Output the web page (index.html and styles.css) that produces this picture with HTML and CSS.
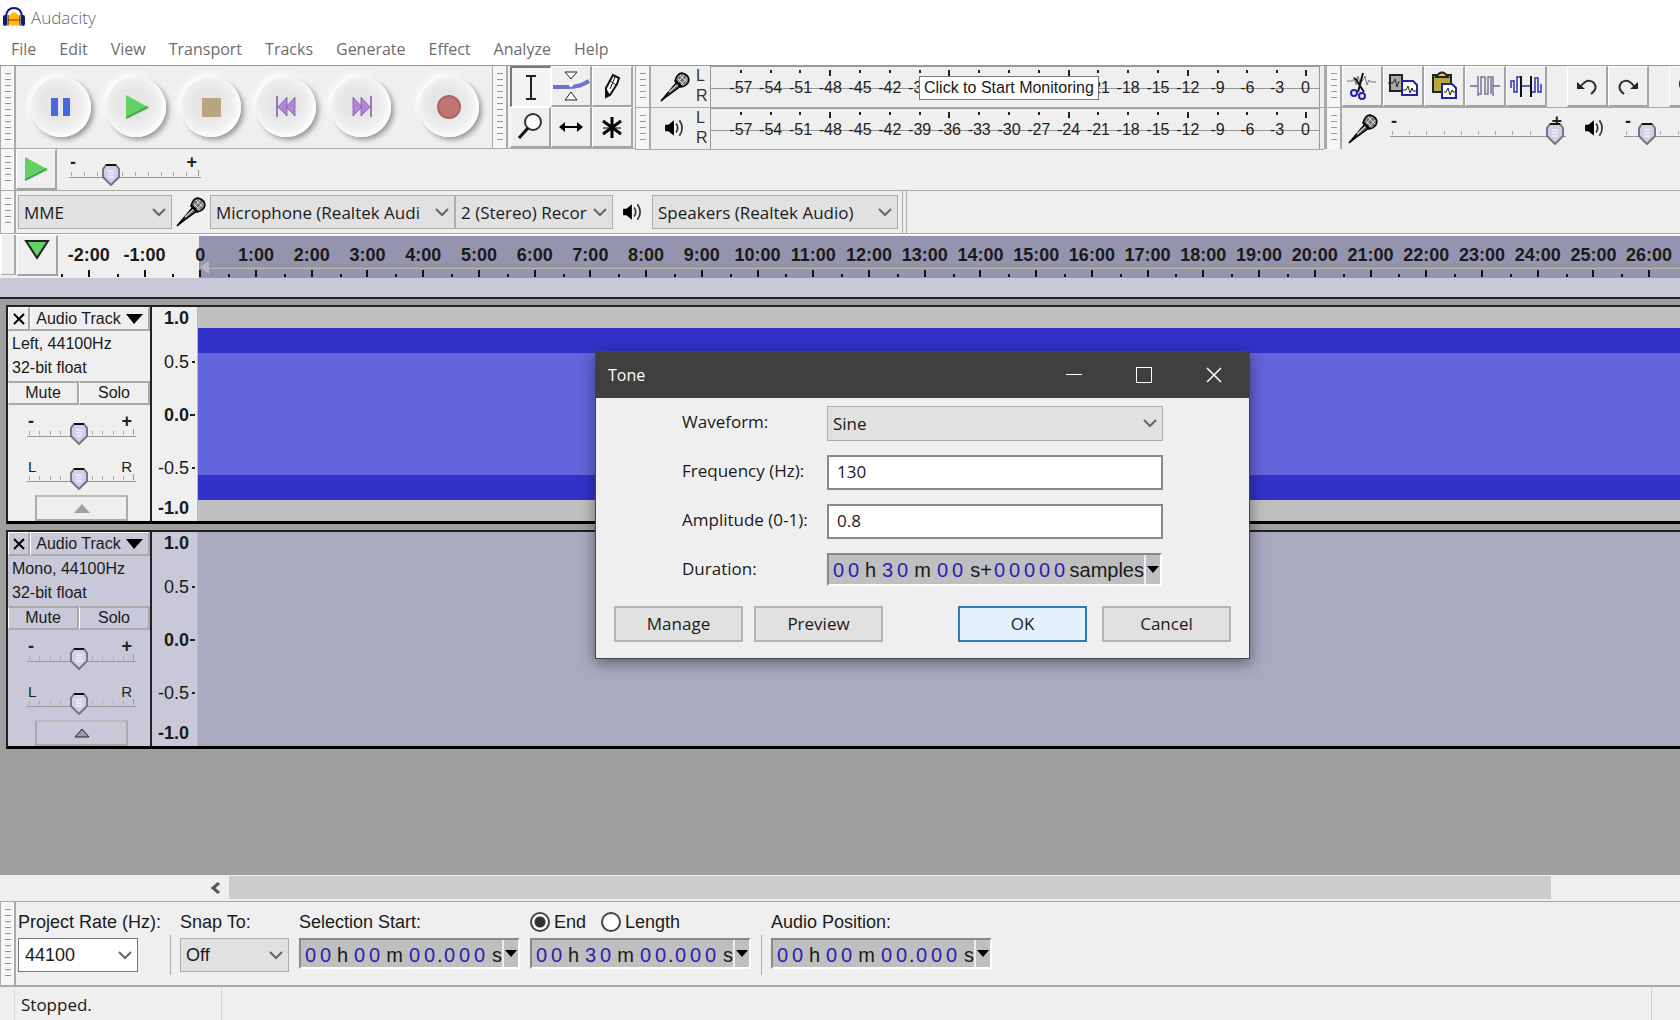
FILE: index.html
```html
<!DOCTYPE html>
<html lang="en">
<head>
<meta charset="UTF-8">
<meta name="viewport" content="width=device-width, initial-scale=1.0">
<title>Audacity</title>
<link rel="stylesheet" href="styles.css">
</head>
<body>

<svg class="defs" width="0" height="0">
    <symbol id="mic" viewBox="0 0 30 30">
        <path d="M1 29 L17 10 L21 14 L6 25 Z" fill="#555" stroke="#000" stroke-width="1.5"/>
        <path d="M9 20 L18 12" stroke="#ccc" stroke-width="1.5"/>
        <path d="M15 9 Q17 1 22 1 Q29 3 29 8 Q28 14 21 15 Z" fill="#777" stroke="#000" stroke-width="1.5"/>
        <path d="M18 7 L24 13 M20 3 L27 10 M24 3 L18 10 M27 6 L21 13" stroke="#ddd"/>
        <path d="M15 8 L22 15" stroke="#000" stroke-width="2"/>
    </symbol>
    <symbol id="speaker" viewBox="0 0 20 20">
        <path d="M1 7 H4 L9 3 V17 L4 13 H1 Z" fill="#000"/>
        <path d="M11 6 Q14 10 11 14 M14 3 Q19 10 14 17" fill="none" stroke="#333" stroke-width="1.5"/>
    </symbol>
</svg>

<header class="titlebar">
    <svg width="22" height="21" viewBox="0 0 22 21">
        <path d="M3 9 Q4 1 11 1 Q18 1 19 9" fill="none" stroke="#111a6e" stroke-width="2"/>
        <path d="M5 9 L8 7 L9 5 L11 6 L13 5 L14 7 L17 9 V17 L14 19 L12 18 L10 19 L5 17 Z" fill="#fdb913"/>
        <path d="M5 12 H17 V14 H5 Z" fill="#e0641c"/>
        <rect x="0" y="8" width="4" height="11" rx="2" fill="#111a6e"/>
        <rect x="18" y="8" width="4" height="11" rx="2" fill="#111a6e"/>
        <path d="M5 8 V19 M17 8 V19" stroke="#222"/>
    </svg>
    <span>Audacity</span>
</header>

<nav class="menu">
    <a href="#">File</a><a href="#">Edit</a><a href="#">View</a><a href="#">Transport</a><a href="#">Tracks</a><a href="#">Generate</a><a href="#">Effect</a><a href="#">Analyze</a><a href="#">Help</a>
</nav>

<div class="dock">
    <div class="toolbar">
        <div class="grip"></div>
        <div class="transport">
            <button class="round" aria-label="Pause"><svg width="26" height="26"><path d="M3 4 h7 v18 h-7 Z M15 4 h7 v18 h-7 Z" fill="#4667e0"/></svg></button>
            <button class="round" aria-label="Play"><svg width="26" height="26"><path d="M3 1 L25 13 L3 24 Z" fill="#65d065"/><path d="M3 24 L25 13" stroke="#4aa84a" stroke-width="2"/></svg></button>
            <button class="round" aria-label="Stop"><svg width="26" height="26"><rect x="4" y="4" width="19" height="19" fill="#b8a77e"/></svg></button>
            <button class="round" aria-label="Skip to Start"><svg width="26" height="26"><path d="M4 2 V23" stroke="#7d5a9c" stroke-width="1.5"/><path d="M14 3 V22 L5 13 Z M22 3 V22 L13 13 Z" fill="#b184dc" stroke="#8d6aae"/></svg></button>
            <button class="round" aria-label="Skip to End"><svg width="26" height="26"><path d="M23 2 V23" stroke="#7d5a9c" stroke-width="1.5"/><path d="M13 3 V22 L22 13 Z M5 3 V22 L14 13 Z" fill="#b184dc" stroke="#8d6aae"/></svg></button>
            <button class="round record" aria-label="Record"><svg width="26" height="26"><circle cx="13" cy="13" r="11" fill="#c07474" stroke="#a86464" stroke-width="2"/></svg></button>
        </div>
    </div>

    <div class="toolbar">
        <div class="grip"></div>
        <div class="tools">
            <button class="tile pressed" aria-label="Selection Tool"><svg width="30" height="30"><path d="M10 4 H20 M10 27 H20 M15 4 V27" stroke="#222" stroke-width="2"/></svg></button>
            <button class="tile" aria-label="Envelope Tool"><svg width="38" height="34"><path d="M1 18 H18 Q28 18 37 12" fill="none" stroke="#7070d0" stroke-width="4"/><path d="M13 3 H25 L19 10 Z M13 31 H25 L19 23 Z" fill="#fff" stroke="#222"/><circle cx="19" cy="16" r="2" fill="#fff"/></svg></button>
            <button class="tile" aria-label="Draw Tool"><svg width="30" height="30"><path d="M9 17 L16 4 L22 7 L20 13 L13 24 L9 26 Z" fill="#fff" stroke="#111" stroke-width="2"/><path d="M9 17 L13 24 L8 27 Z" fill="#111"/><path d="M13 10 L19 14 M18 6 L13 18" stroke="#111"/></svg></button>
            <button class="tile" aria-label="Zoom Tool"><svg width="30" height="30"><circle cx="18" cy="10" r="8" fill="#fff" stroke="#333" stroke-width="2"/><path d="M13 16 L4 26" stroke="#111" stroke-width="3"/></svg></button>
            <button class="tile" aria-label="Time Shift Tool"><svg width="30" height="30"><path d="M6 15 H24" stroke="#000" stroke-width="2"/><path d="M3 15 L9 10 V20 Z M27 15 L21 10 V20 Z"/></svg></button>
            <button class="tile" aria-label="Multi-Tool"><svg width="30" height="30"><path d="M15 5 V26 M6 9 L24 22 M24 9 L6 22" stroke="#000" stroke-width="3"/><path d="M6 16 H24" stroke="#000"/></svg></button>
        </div>
    </div>

    <div class="meters">
        <div class="toolbar meter">
            <div class="grip"></div>
            <svg class="meter-icon" width="30" height="30"><use href="#mic"/></svg>
            <div class="channels"><span>L</span><span>R</span></div>
            <div class="scale"></div>
            <div class="tooltip">Click to Start Monitoring</div>
        </div>
        <div class="toolbar meter">
            <div class="grip"></div>
            <svg class="meter-icon" width="22" height="22"><use href="#speaker"/></svg>
            <div class="channels"><span>L</span><span>R</span></div>
            <div class="scale"></div>
        </div>
    </div>

    <div class="edit-mixer">
        <div class="toolbar">
            <div class="grip"></div>
            <button class="tile" aria-label="Cut"><svg width="32" height="32"><path d="M1 11 H7 l1 -4 l2 8 l2 -9 l2 7 l3 -3 l2 -4 l2 9 l2 -5 l2 2 H30" fill="none" stroke="#777"/><path d="M17 3 L12 22 M9 8 L18 22" stroke="#111" stroke-width="2"/><circle cx="8" cy="23" r="3" fill="none" stroke="#2222b0" stroke-width="2"/><circle cx="16" cy="26" r="3" fill="none" stroke="#2222b0" stroke-width="2"/></svg></button>
            <button class="tile" aria-label="Copy"><svg width="32" height="32"><rect x="3" y="5" width="12" height="16" fill="#aaa" stroke="#222" stroke-width="2"/><path d="M1 13 H6 l2 -4 l2 8 l2 -6" fill="none" stroke="#222"/><path d="M15 11 H26 L30 15 V25 H15 Z" fill="#fff" stroke="#2222b0" stroke-width="2"/><path d="M15 20 h4 l2 -4 l2 7 l2 -5 l1 3 h4" fill="none" stroke="#222"/></svg></button>
            <button class="tile" aria-label="Paste"><svg width="32" height="32"><rect x="5" y="5" width="18" height="17" fill="#b6a93c" stroke="#222" stroke-width="2"/><path d="M8 7 Q14 -2 20 7 Z" fill="#d8cc50" stroke="#222" stroke-width="2"/><path d="M14 14 H24 L28 18 V28 H14 Z" fill="#fff" stroke="#2222b0" stroke-width="2"/><path d="M16 22 h2 l2 -4 l2 7 l2 -5 l1 2 h2" fill="none" stroke="#222"/></svg></button>
            <button class="tile" aria-label="Trim Audio"><svg width="32" height="32"><path d="M1 16 H8 M24 16 H31" stroke="#6a6a90" stroke-width="1.5"/><path d="M9 6 V26 M9 24 H12 V7 H16 V24 H19 V7 H22 V24 M24 6 V26" fill="none" stroke="#777794" stroke-width="1.5"/></svg></button>
            <button class="tile" aria-label="Silence Audio"><svg width="32" height="32"><path d="M1 18 V11 H4 V22 H7 V7 H10 M11 16 H22 M22 22 H25 V8 H28 V22 H31 V14" fill="none" stroke="#3030b8" stroke-width="1.5"/><path d="M11 6 V27 M21 6 V27" stroke="#111" stroke-width="2"/></svg></button>
            <span class="spacer"></span>
            <button class="tile" aria-label="Undo"><svg width="30" height="30"><path d="M9 15 Q15 7 21 11 Q27 17 19 23" fill="none" stroke="#333" stroke-width="2"/><path d="M5 11 V18 H13 Z" fill="#222"/></svg></button>
            <button class="tile" aria-label="Redo"><svg width="30" height="30"><path d="M21 15 Q15 7 9 11 Q3 17 11 23" fill="none" stroke="#333" stroke-width="2"/><path d="M25 11 V18 H17 Z" fill="#222"/></svg></button>
            <span class="spacer"></span>
            <button class="tile" aria-label="Zoom In"><svg width="26" height="30"><circle cx="12" cy="13" r="8" fill="#fff" stroke="#222" stroke-width="2"/></svg></button>
        </div>
        <div class="toolbar mixer">
            <div class="grip"></div>
            <svg class="mixer-mic" width="30" height="30"><use href="#mic"/></svg>
            <div class="slider mix"><span class="ends"><b>-</b><b>+</b></span><input type="range" aria-label="Recording Volume" value="99"></div>
            <svg class="mixer-speaker" width="22" height="24"><use href="#speaker"/></svg>
            <div class="slider mix"><span class="ends"><b>-</b></span><input type="range" aria-label="Playback Volume" value="9"></div>
        </div>
    </div>
</div>

<div class="toolbar speed">
    <div class="grip"></div>
    <button class="tile" aria-label="Play-at-Speed"><svg width="30" height="30"><path d="M4 3 L26 15 L4 26 Z" fill="#65d065"/><path d="M4 26 L26 15" stroke="#4aa84a" stroke-width="2"/></svg></button>
    <div class="slider"><span class="ends"><b>-</b><b>+</b></span><input type="range" aria-label="Playback Speed" value="29"></div>
</div>

<div class="toolbar device">
    <div class="grip"></div>
    <select class="host" aria-label="Audio Host"><option>MME</option></select>
    <svg class="device-mic" width="30" height="30"><use href="#mic"/></svg>
    <select class="input" aria-label="Recording Device"><option>Microphone (Realtek Audi</option></select>
    <select class="record-channels" aria-label="Recording Channels"><option>2 (Stereo) Recor</option></select>
    <svg class="device-speaker" width="22" height="22"><use href="#speaker"/></svg>
    <select class="output" aria-label="Playback Device"><option>Speakers (Realtek Audio)</option></select>
    <div class="device-end"></div>
</div>

<div class="timeline">
    <div class="stub"></div>
    <button class="tile pin" aria-label="Pinned Play Head"><svg width="30" height="30"><path d="M4 5 H26 L15 22 Z" fill="#65d065" stroke="#222" stroke-width="2"/></svg></button>
    <div class="ruler" id="ruler"></div>
</div>
<div class="strip"></div>

<main class="tracks">
    <section class="track">
        <div class="panel">
            <div class="panel-title"><button aria-label="Close"><svg width="14" height="14"><path d="M2 2 L12 12 M12 2 L2 12" stroke="#000" stroke-width="2"/></svg></button><button class="name">Audio Track<svg width="17" height="10"><path d="M0 0 H17 L8 10 Z"/></svg></button></div>
            <div class="info">Left, 44100Hz<br>32-bit float</div>
            <div class="mute-solo"><button>Mute</button><button>Solo</button></div>
            <div class="slider"><span class="ends"><b>-</b><b>+</b></span><input type="range" aria-label="Gain" value="47"></div>
            <div class="slider"><span class="ends"><span>L</span><span>R</span></span><input type="range" aria-label="Pan" value="47"></div>
            <button class="collapse" aria-label="Collapse"><svg width="18" height="10"><path d="M1 10 L9 1 L17 10 Z" fill="#a0a0a0"/></svg></button>
        </div>
        <div class="levels"><b>1.0</b><span class="dash">0.5</span><b class="dash">0.0</b><span class="dash">-0.5</span><b>-1.0</b></div>
        <div class="wave"><div class="peak"><div class="rms"></div></div></div>
    </section>

    <section class="track selected">
        <div class="panel">
            <div class="panel-title"><button aria-label="Close"><svg width="14" height="14"><path d="M2 2 L12 12 M12 2 L2 12" stroke="#000" stroke-width="2"/></svg></button><button class="name">Audio Track<svg width="17" height="10"><path d="M0 0 H17 L8 10 Z"/></svg></button></div>
            <div class="info">Mono, 44100Hz<br>32-bit float</div>
            <div class="mute-solo"><button>Mute</button><button>Solo</button></div>
            <div class="slider"><span class="ends"><b>-</b><b>+</b></span><input type="range" aria-label="Gain" value="47"></div>
            <div class="slider"><span class="ends"><span>L</span><span>R</span></span><input type="range" aria-label="Pan" value="47"></div>
            <button class="collapse" aria-label="Collapse"><svg width="18" height="10"><path d="M2 9 L9 1 L16 9 Z" fill="#9a9aa8" stroke="#222"/></svg></button>
        </div>
        <div class="levels"><b>1.0</b><span class="dash">0.5</span><b class="dash">0.0</b><span class="dash">-0.5</span><b>-1.0</b></div>
        <div class="wave"></div>
    </section>
</main>

<div class="scrollbar">
    <button aria-label="Scroll left"><svg width="12" height="12"><path d="M9 1 L3 6 L9 11" fill="none" stroke="#555" stroke-width="3"/></svg></button>
    <div class="thumb"></div>
</div>

<div class="toolbar selection">
    <div class="grip"></div>
    <div class="field rate">
        <label for="rate">Project Rate (Hz):</label>
        <select id="rate"><option>44100</option></select>
    </div>
    <div class="divider"></div>
    <div class="field snap">
        <label for="snap">Snap To:</label>
        <select id="snap"><option>Off</option></select>
    </div>
    <div class="field">
        <span>Selection Start:</span>
        <div class="time" data-time="00 h 00 m 00.000 s"></div>
    </div>
    <div class="field">
        <div class="radios">
            <label><input type="radio" name="range" checked>End</label>
            <label><input type="radio" name="range">Length</label>
        </div>
        <div class="time" data-time="00 h 30 m 00.000 s"></div>
    </div>
    <div class="divider"></div>
    <div class="field">
        <span>Audio Position:</span>
        <div class="time" data-time="00 h 00 m 00.000 s"></div>
    </div>
</div>

<footer class="status">
    <span class="state">Stopped.</span>
    <span class="message"></span>
    <span class="corner"></span>
</footer>

<div class="dialog" role="dialog" aria-label="Tone">
    <div class="dialog-title">
        <span>Tone</span>
        <button aria-label="Minimize"><svg width="16" height="16"><path d="M0 7.5 H16" stroke="#fff"/></svg></button>
        <button aria-label="Maximize"><svg width="16" height="16"><rect x="0.5" y="0.5" width="15" height="15" fill="none" stroke="#fff"/></svg></button>
        <button aria-label="Close"><svg width="16" height="16"><path d="M1 1 L15 15 M15 1 L1 15" stroke="#fff" stroke-width="1.5"/></svg></button>
    </div>
    <div class="form">
        <label for="waveform">Waveform:</label>
        <select id="waveform"><option>Sine</option></select>
        <label for="frequency">Frequency (Hz):</label>
        <input type="text" id="frequency" value="130">
        <label for="amplitude">Amplitude (0-1):</label>
        <input type="text" id="amplitude" value="0.8">
        <span>Duration:</span>
        <div class="time" data-time="00 h 30 m 00 s+00000 samples"></div>
    </div>
    <div class="buttons">
        <button>Manage</button>
        <button>Preview</button>
        <button class="ok">OK</button>
        <button>Cancel</button>
    </div>
</div>

<script>
// dB scale of the two level meters
document.querySelectorAll('.scale').forEach(scale => {
    for (let db = -57; db <= 0; db += 3) {
        let mark = document.createElement('span');
        mark.textContent = db;
        if (db % 12 === 0) mark.className = 'major';
        scale.appendChild(mark);
    }
});

// minutes on the timeline
let ruler = document.getElementById('ruler');
for (let min = -2; min <= 26; min++) {
    let mark = document.createElement('span');
    mark.textContent = min === 0 ? '0' : min + ':00';
    ruler.appendChild(mark);
}

// time fields: one cell for each digit, one for each unit
document.querySelectorAll('.time').forEach(time => {
    time.dataset.time.match(/\d|[^\d]+/g).forEach(part => {
        let cell = document.createElement('span');
        let unit = part.trim();
        cell.textContent = unit;
        cell.className = /\d/.test(unit) ? 'digit' : unit === '.' ? 'dot' : unit === 'm' ? 'unit wide' : unit === 's+' ? 'unit plus' : 'unit';
        time.appendChild(cell);
    });
    let arrow = document.createElement('button');
    arrow.setAttribute('aria-label', 'Time format');
    arrow.innerHTML = '<svg width="12" height="7"><path d="M0 0 H12 L6 7 Z"/></svg>';
    time.appendChild(arrow);
});
</script>

</body>
</html>
```

FILE: styles.css
```css
* { box-sizing: border-box; }
body { margin: 0; min-height: 100vh; display: flex; flex-direction: column; background: #fff; color: #1a1a1a; font-family: "Open Sans", "Noto Sans", sans-serif; font-size: 17px; overflow: hidden; }
button, select, input { font: inherit; color: inherit; margin: 0; }
button { display: flex; align-items: center; justify-content: center; padding: 0; border: 0; background: none; }
svg { display: block; flex: none; }
.defs { position: absolute; }

.titlebar { display: flex; align-items: center; gap: 6px; height: 35px; padding-left: 3px; color: #666; font-weight: 300; }
.menu { display: flex; gap: 23px; height: 30px; padding: 0 0 2px 11px; align-items: center; font-size: 16px; line-height: 28px; }
.menu a { color: #6d6d6d; text-decoration: none; }

/* toolbars */
.dock { display: flex; height: 84px; border-top: 1px solid #999; background: #efefef; }
.toolbar { display: flex; background: #efefef; border-bottom: 1px solid #aaa; }
.grip { flex: none; width: 16px; border: 1px solid #aaa; border-width: 0 2px 0 1px; background: repeating-linear-gradient(#999 0 1px, transparent 1px 6px) center / 6px calc(100% - 14px) no-repeat #f6f6f6; }
.transport { display: flex; align-items: center; gap: 15px; width: 476px; padding-left: 15px; }
.round { flex: none; width: 60px; height: 60px; border-radius: 50%; background: radial-gradient(circle at 44% 44%, #e6e6e6 30%, #f4f4f4 66%); box-shadow: 3px 3px 5px #9c9c9c, -3px -3px 6px #fff, inset -2px -2px 5px #fff; }
.record { margin-left: 13px; }
.tools { display: grid; grid-template-columns: repeat(3, 41px); width: 127px; padding-left: 2px; }
.tile { flex: none; width: 41px; height: 41px; border: 1px solid #fff; border-right: 2px solid #a4a4a4; border-bottom: 2px solid #a4a4a4; background: #efefef; }
.tile.pressed { border: 1px solid #fff; border-top: 2px solid #777; border-left: 2px solid #777; background: #f4f4f4; }

.meters { flex: 1; min-width: 0; border-right: 2px solid #aaa; }
.meter { position: relative; height: 42px; }
.meter-icon { margin: 6px 6px 0 9px; }
.meter:last-child .meter-icon { margin: 9px 10px 0 13px; }
.channels { display: flex; flex-direction: column; width: 14px; font: 16px/20px "Liberation Sans", sans-serif; color: #333; }
.scale { flex: 1; display: grid; grid-template-columns: repeat(19, 1fr) 27px; margin-right: 4px; padding-left: 15px; border: 1px solid #999; border-bottom: 0; background: linear-gradient(#999, #999) 0 21px / 100% 1px no-repeat; font: 16px/41px "Liberation Sans", sans-serif; text-align: center; color: #222; }
.scale span { background: linear-gradient(#222, #222) center 3px / 2px 3px no-repeat; }
.scale .major { background-size: 2px 6px; }
.tooltip { position: absolute; left: 284px; top: 10px; height: 24px; padding: 0 4px; border: 1px solid #777; background: #fff; font: 16px/22px "Liberation Sans", sans-serif; }

.edit-mixer { width: 354px; overflow: hidden; }
.edit-mixer .toolbar { height: 42px; }
.spacer { flex: none; width: 20px; }
.mixer-mic { margin: 6px 12px 0 6px; }
.mixer-speaker { margin: 8px 18px 0 18px; }

/* sliders */
.slider { position: relative; flex: none; width: 132px; }
.slider .ends { display: flex; justify-content: space-between; padding: 0 4px 0 1px; font: 15px/15px "Liberation Sans", sans-serif; color: #222; }
.slider .ends b { font-size: 18px; }
.slider input { appearance: none; display: block; width: 100%; height: 22px; margin-top: -6px; background:
    linear-gradient(#999, #999) 0 13px / 100% 1px no-repeat,
    linear-gradient(#999, #999) calc(100% - 2px) 6px / 1px 6px no-repeat,
    repeating-linear-gradient(90deg, #aaa 0 1px, transparent 1px 10%) 2px 8px / calc(100% - 4px) 4px no-repeat; }
.slider input::-webkit-slider-thumb { appearance: none; width: 18px; height: 22px; background: url("data:image/svg+xml,%3Csvg xmlns='http://www.w3.org/2000/svg' width='18' height='22'%3E%3Cpath d='M4 1H14L17 5V13L9 21L1 13V5Z' fill='%23d0d0ea' stroke='%23777' stroke-width='2'/%3E%3Cpath d='M4 1H14' stroke='%23111' stroke-width='2'/%3E%3Cpath d='M6 7H12M6 10H12M6 13H12' stroke='%23fff'/%3E%3C/svg%3E"); }
.speed { height: 42px; }
.speed .slider { margin: 6px 0 0 12px; }
.slider.mix { width: 176px; padding-top: 6px; }

/* drop-downs */
select { appearance: none; height: 34px; padding: 0 5px; border: 1px solid #adadad; border-radius: 0; background: url("data:image/svg+xml,%3Csvg xmlns='http://www.w3.org/2000/svg' width='14' height='9'%3E%3Cpath d='M1 1L7 7L13 1' fill='none' stroke='%23666' stroke-width='2'/%3E%3C/svg%3E") calc(100% - 5px) center no-repeat #e1e1e1; }
.device { height: 43px; align-items: center; }
.device .grip { align-self: stretch; }
.host { width: 154px; margin-left: 2px; }
.device-mic { margin: 0 4px; }
.input { width: 245px; }
.record-channels { width: 158px; }
.device-speaker { margin: 0 8px 0 9px; }
.output { width: 246px; }
.device-end { align-self: stretch; width: 5px; margin-left: 4px; border: 1px solid #aaa; border-width: 0 1px; }

/* timeline */
.timeline { display: flex; height: 44px; background: #efefef; border-top: 1px solid #fff; }
.stub { width: 16px; height: 40px; border-left: 2px solid #fff; border-right: 2px solid #aaa; border-bottom: 1px solid #aaa; }
.pin { margin: 0 0 0 1px; align-items: flex-start; }
.ruler { flex: 1; display: grid; grid-template-columns: repeat(29, 1fr); margin-top: 1px; padding: 0 3px; background:
    url("data:image/svg+xml,%3Csvg xmlns='http://www.w3.org/2000/svg' width='9' height='13'%3E%3Cpath d='M0 6L9 0V13Z' fill='%23b8b8b8'/%3E%3C/svg%3E") 142px 25px no-repeat,
    linear-gradient(#888, #bbb) 150px 30px / 100% 3px no-repeat,
    linear-gradient(#9494ae, #9494ae) 141px 0 / 100% 100% no-repeat; font: bold 18px/38px "Liberation Sans", sans-serif; text-align: center; }
.ruler span { white-space: nowrap; background: linear-gradient(#111, #111) center 34px / 2px 7px no-repeat, linear-gradient(#111, #111) 0 38px / 2px 3px no-repeat; }
.strip { height: 21px; background: #c8c8d8; border-bottom: 2px solid #222; }

/* tracks */
.tracks { flex: 1; display: flex; flex-direction: column; gap: 6px; padding: 6px 0 0 6px; background: #9f9f9f; font: 16px/24px "Liberation Sans", sans-serif; }
.track { display: flex; height: 219px; border: 2px solid #222; border-right: 0; border-bottom: 3px solid #000; background: #efefef; }
.panel { width: 144px; border-right: 2px solid #222; }
.panel button { border: 1px solid #fff; border-right: 2px solid #aaa; border-bottom: 2px solid #aaa; height: 24px; }
.panel-title { display: flex; line-height: 20px; }
.panel-title button { width: 22px; }
.panel-title .name { flex: 1; gap: 5px; }
.info { height: 50px; padding: 1px 0 0 4px; }
.mute-solo { display: flex; }
.mute-solo button { flex: 1; border-top: 2px solid #aaa; }
.panel .slider { width: 109px; margin: 9px 0 0 19px; }
.panel .slider + .slider { margin-top: 14px; }
.panel .collapse { width: 93px; height: 26px; margin: 5px 0 0 27px; border: 2px solid #aaa; border-top-color: #bbb; }
.levels { display: grid; grid-template-rows: 28px 1fr 1fr 1fr 26px; width: 46px; padding-right: 8px; border-right: 1px solid #bbb; font-size: 18px; text-align: right; align-items: center; line-height: 24px; }
.levels b:first-child { align-self: start; line-height: 22px; }
.levels .dash { margin-right: -6px; background: linear-gradient(#222, #222) right center / 5px 2px no-repeat; padding-right: 6px; }
.levels span.dash { background-size: 3px 2px; }
.wave { flex: 1; padding: 21px 0; background: #c0c0c0; }
.peak { height: 100%; padding: 25px 0; background: #3232c8; }
.rms { height: 100%; background: #6464dc; }
.selected, .selected button { background: #c8c8d8; }
.selected .wave { background: #a9a9c0; }

.scrollbar { display: flex; height: 26px; padding-left: 203px; background: #efefef; }
.scrollbar button { width: 26px; }
.scrollbar .thumb { flex: 1; margin: 1px 129px 2px 0; background: #cdcdcd; }

/* selection bar */
.selection { height: 86px; border-top: 1px solid #aaa; border-bottom: 2px solid #aaa; font: 18px/24px "Liberation Sans", sans-serif; }
.field { margin-right: 10px; padding-top: 8px; white-space: nowrap; }
.field select { display: block; margin-top: 4px; }
.field .time { margin-top: 4px; }
.rate { width: 142px; margin-left: 2px; }
.rate select { width: 120px; padding-left: 6px; border-color: #777; background-color: #fff; }
.snap select { width: 109px; }
.divider { width: 1px; height: 40px; margin: 33px 9px 0 0; background: #aaa; }
.radios { display: flex; gap: 15px; }
.radios label { display: flex; align-items: center; gap: 4px; }
.radios input { appearance: none; width: 20px; height: 20px; border: 2px solid #444; border-radius: 50%; background: #fff; }
.radios input:checked { background: radial-gradient(circle, #333 5px, #fff 6px); }

.time { display: flex; width: 221px; height: 31px; padding-left: 2px; border: 2px solid #888; border-right-color: #fff; border-bottom-color: #fff; background: #bfbfbf; font: 20px/30px "Liberation Sans", sans-serif; text-align: center; }
.time .digit { width: 15px; color: #2a1eb4; }
.time .dot { width: 5px; }
.time .unit { width: 19px; }
.time .wide { width: 25px; }
.time .plus { width: 27px; text-align: right; }
.time .unit:nth-last-child(2) { flex: 1; text-align: right; }
.time button { width: 16px; border-left: 2px solid #eee; }

.status { display: flex; height: 33px; padding-left: 14px; background: #efefef; line-height: 36px; }
.state { width: 207px; padding-left: 6px; border-left: 1px solid #ddd; }
.message { flex: 1; border-left: 1px solid #d0d0d0; border-right: 1px solid #d0d0d0; }
.corner { width: 28px; }

/* tone dialog */
.dialog { position: absolute; left: 595px; top: 351px; width: 655px; border: 1px solid #444; background: #efefef; box-shadow: 0 4px 14px rgba(0, 0, 0, 0.45); }
.dialog-title { display: flex; align-items: center; height: 46px; padding-left: 12px; background: #3f3f3f; color: #fff; font-size: 16px; }
.dialog-title span { flex: 1; }
.dialog-title button { width: 70px; height: 46px; }
.form { display: grid; grid-template-columns: 145px 336px; row-gap: 14px; padding: 8px 0 0 86px; line-height: 32px; }
.form input { width: 336px; height: 35px; padding: 0 8px 2px; border: 2px solid #8a8a8a; background: #fff; }
.form select { width: 336px; height: 35px; }
.form .time { width: 335px; height: 33px; }
.buttons { display: flex; gap: 11px; padding: 20px 18px 16px; }
.buttons button { width: 129px; height: 36px; padding-bottom: 2px; border: 2px solid #b4b4b4; background: #e1e1e1; }
.buttons .ok { margin-left: auto; border-color: #2a7ac4; background: #e3f1fb; }
.buttons button:last-child { margin-left: 4px; }
```
